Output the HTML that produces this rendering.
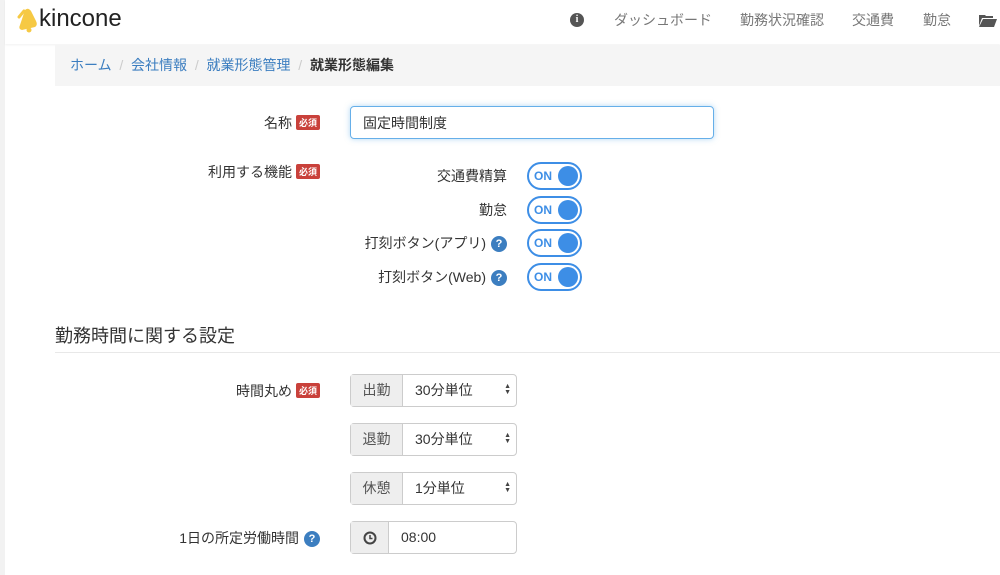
<!DOCTYPE html>
<html><head><meta charset="utf-8"><style>
*{box-sizing:border-box;margin:0;padding:0}
body{width:1000px;height:575px;overflow:hidden;background:#fff;font-family:"Liberation Sans","Noto Sans CJK JP",sans-serif;font-size:14px;color:#333;position:relative}
.a{position:absolute;white-space:nowrap}
.strip{left:0;top:0;width:5px;height:575px;background:#f2f2f2}
.hdr{left:5px;top:0;width:995px;height:44px;background:#fff;box-shadow:0 1px 2px rgba(0,0,0,.06)}
.nav{color:#777;font-size:14px;top:10px}
.bc{left:55px;top:45px;width:945px;height:41px;background:#f5f5f5}
.lk{color:#3c7ec0}
.sl{color:#ccc}
.lbl{text-align:right;font-size:14px;color:#333}
.req{display:inline-block;background:#c9413b;color:#fff;font-size:9px;font-weight:bold;padding:1px 3px;border-radius:2px;vertical-align:2px;margin-left:4px}
.tog{width:55px;height:28px;border:2px solid #3d8ee6;border-radius:14px;background:#fff}
.tog b{position:absolute;left:5px;top:0;line-height:24px;font-size:12px;color:#3d8ee6;font-weight:bold}
.tog i{position:absolute;right:2px;top:2px;width:20px;height:20px;border-radius:50%;background:#3d8ee6}
.q{display:inline-block;width:16px;height:16px;border-radius:50%;background:#3c7ec0;color:#fff;font-size:11px;font-weight:bold;text-align:center;line-height:16px;vertical-align:1px;margin-left:5px}
.sel{left:350px;width:167px;height:33px;border:1px solid #ccc;border-radius:4px;background:#fff}
.sel .ad{position:absolute;left:0;top:0;width:52px;height:31px;background:#eee;border-right:1px solid #ccc;text-align:center;line-height:31px;color:#555}
.sel .v{position:absolute;left:64px;top:0;line-height:31px;color:#333;font-size:14px}
.sel .ar{position:absolute;right:5px;top:9px;font-size:7px;line-height:6px;color:#444}
</style></head><body>
<div class="a strip"></div>
<div class="a hdr"></div>
<svg class="a" style="left:16px;top:7px" width="24" height="26" viewBox="0 0 24 26"><path d="M9 3 Q12 0 15 4 L20 14 Q22 18 19 20 L6 23 Q2 22 4 18 Z" fill="#f6c944"/><path d="M3 10 L8 4" stroke="#f6c944" stroke-width="3" stroke-linecap="round"/><circle cx="13" cy="23" r="2.5" fill="#f6c944"/></svg>
<div class="a" style="left:39px;top:5px;font-size:24px;color:#222">kincone</div>
<div class="a" style="left:570px;top:13px;width:14px;height:14px;border-radius:50%;background:#555;color:#fff;font-size:10px;font-weight:bold;text-align:center;line-height:14px;font-family:'Liberation Serif',serif">i</div>
<div class="a nav" style="left:614px">ダッシュボード</div>
<div class="a nav" style="left:740px">勤務状況確認</div>
<div class="a nav" style="left:852px">交通費</div>
<div class="a nav" style="left:923px">勤怠</div>
<svg class="a" style="left:979px;top:14px" width="18" height="13" viewBox="0 0 18 13"><path d="M0 1 H6 L7 2 H14 V4 H3 L0 12 Z" fill="#555"/><path d="M4 5 H18 L15 13 H0 Z" fill="#555"/></svg>
<div class="a bc"></div>
<div class="a" style="left:70px;top:55px;font-size:14px;color:#333"><span class="lk">ホーム</span><span class="sl">&nbsp;&nbsp;/&nbsp;&nbsp;</span><span class="lk">会社情報</span><span class="sl">&nbsp;&nbsp;/&nbsp;&nbsp;</span><span class="lk">就業形態管理</span><span class="sl">&nbsp;&nbsp;/&nbsp;&nbsp;</span><b>就業形態編集</b></div>

<div class="a lbl" style="right:680px;top:113px">名称<span class="req">必須</span></div>
<div class="a" style="left:350px;top:106px;width:364px;height:33px;border:1px solid #66afe9;border-radius:4px;box-shadow:0 0 6px rgba(102,175,233,.5);padding:6px 12px;font-size:14px">固定時間制度</div>
<div class="a lbl" style="right:680px;top:162px">利用する機能<span class="req">必須</span></div>

<div class="a lbl" style="right:493px;top:166px">交通費精算</div>
<div class="a tog" style="left:527px;top:162px"><b>ON</b><i></i></div>
<div class="a lbl" style="right:493px;top:200px">勤怠</div>
<div class="a tog" style="left:527px;top:196px"><b>ON</b><i></i></div>
<div class="a lbl" style="right:493px;top:233px">打刻ボタン(アプリ)<span class="q">?</span></div>
<div class="a tog" style="left:527px;top:229px"><b>ON</b><i></i></div>
<div class="a lbl" style="right:493px;top:267px">打刻ボタン(Web)<span class="q">?</span></div>
<div class="a tog" style="left:527px;top:263px"><b>ON</b><i></i></div>

<div class="a" style="left:55px;top:322px;font-size:18px;color:#333">勤務時間に関する設定</div>
<div class="a" style="left:55px;top:352px;width:945px;height:1px;background:#e8e8e8"></div>

<div class="a lbl" style="right:680px;top:381px">時間丸め<span class="req">必須</span></div>
<div class="a sel" style="top:374px"><div class="ad">出勤</div><div class="v">30分単位</div><div class="ar">▲<br>▼</div></div>
<div class="a sel" style="top:423px"><div class="ad">退勤</div><div class="v">30分単位</div><div class="ar">▲<br>▼</div></div>
<div class="a sel" style="top:472px"><div class="ad">休憩</div><div class="v">1分単位</div><div class="ar">▲<br>▼</div></div>
<div class="a lbl" style="right:680px;top:528px">1日の所定労働時間<span class="q">?</span></div>
<div class="a sel" style="top:521px"><div class="ad" style="width:38px"><svg width="14" height="14" viewBox="0 0 14 14" style="margin-top:9px"><circle cx="7" cy="7" r="5.5" fill="none" stroke="#444" stroke-width="2"/><path d="M7 4 V7.5 H9.5" fill="none" stroke="#444" stroke-width="1.5"/></svg></div><div class="v" style="left:50px">08:00</div></div>
</body></html>
